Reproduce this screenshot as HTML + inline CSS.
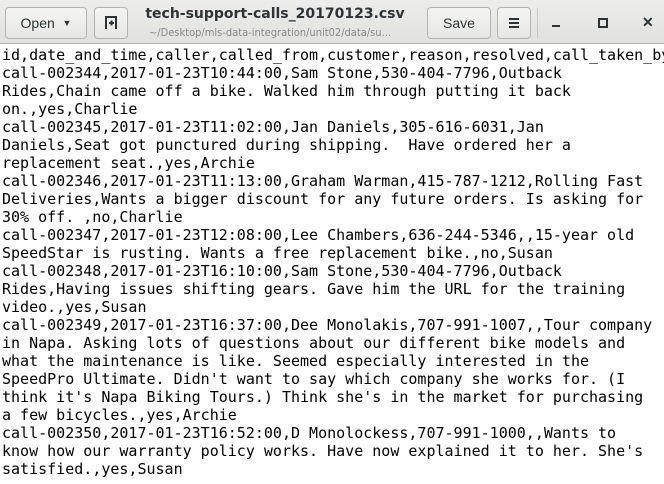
<!DOCTYPE html><html><head><style>
body{margin:0;width:664px;height:484px;overflow:hidden;background:#fff;font-family:"Liberation Sans",sans-serif}
.hb{position:absolute;left:0;top:0;width:664px;height:44px;background:linear-gradient(#ededec,#e1e1df);border-bottom:1px solid #b6b6b3;box-sizing:border-box}
.btn{position:absolute;top:7px;height:32px;box-sizing:border-box;border:1px solid #b3b3b0;border-radius:4px;background:linear-gradient(#f4f4f3,#e6e6e4);font-size:14px;color:#2e3436;display:flex;align-items:center;justify-content:center}
.t{position:absolute;left:130px;width:290px;text-align:center;top:6px;font-weight:bold;color:#2e3436;font-family:"DejaVu Sans",sans-serif;font-size:14px}
.s{position:absolute;left:110px;width:320px;text-align:center;top:26px;font-size:11px;color:#888a85;font-family:"DejaVu Sans Condensed","DejaVu Sans",sans-serif}
pre{position:absolute;left:2px;top:46px;margin:0;font-family:"DejaVu Sans Mono",monospace;font-size:15px;line-height:18px;color:#000;white-space:pre;width:662px;overflow:hidden}
.w{position:absolute;top:14px;font-size:14px;color:#2e3436;font-weight:bold}
</style></head><body>
<div class="hb">
<div class="btn" style="left:5px;width:82px">Open&nbsp;&nbsp;<span style="font-size:9px">▼</span></div>
<div class="btn" style="left:94px;width:34px"><svg width="14" height="14" viewBox="0 0 14 14"><path d="M2 13V1h10v12M5 7h5M7.5 4.5v5" stroke="#2e3436" stroke-width="2" fill="none"/></svg></div>
<div class="t">tech-support-calls_20170123.csv</div>
<div class="s">~/Desktop/mls-data-integration/unit02/data/su...</div>
<div class="btn" style="left:427px;width:64px">Save</div>
<div class="btn" style="left:497px;width:34px"><svg width="12" height="12"><path d="M1 2h10M1 6h10M1 10h10" stroke="#2e3436" stroke-width="2"/></svg></div>
<div style="position:absolute;left:537px;top:8px;width:1px;height:30px;background:#c8c8c5"></div>
<div style="position:absolute;left:552px;top:25px;width:8px;height:2px;background:#2e3436"></div>
<div style="position:absolute;left:598px;top:18px;width:6px;height:6px;border:2px solid #2e3436"></div>
<div class="w" style="left:642px">✕</div>
</div>
<pre>id,date_and_time,caller,called_from,customer,reason,resolved,call_taken_by
call-002344,2017-01-23T10:44:00,Sam Stone,530-404-7796,Outback
Rides,Chain came off a bike. Walked him through putting it back
on.,yes,Charlie
call-002345,2017-01-23T11:02:00,Jan Daniels,305-616-6031,Jan
Daniels,Seat got punctured during shipping.  Have ordered her a
replacement seat.,yes,Archie
call-002346,2017-01-23T11:13:00,Graham Warman,415-787-1212,Rolling Fast
Deliveries,Wants a bigger discount for any future orders. Is asking for
30% off. ,no,Charlie
call-002347,2017-01-23T12:08:00,Lee Chambers,636-244-5346,,15-year old
SpeedStar is rusting. Wants a free replacement bike.,no,Susan
call-002348,2017-01-23T16:10:00,Sam Stone,530-404-7796,Outback
Rides,Having issues shifting gears. Gave him the URL for the training
video.,yes,Susan
call-002349,2017-01-23T16:37:00,Dee Monolakis,707-991-1007,,Tour company
in Napa. Asking lots of questions about our different bike models and
what the maintenance is like. Seemed especially interested in the
SpeedPro Ultimate. Didn't want to say which company she works for. (I
think it's Napa Biking Tours.) Think she's in the market for purchasing
a few bicycles.,yes,Archie
call-002350,2017-01-23T16:52:00,D Monolockess,707-991-1000,,Wants to
know how our warranty policy works. Have now explained it to her. She's
satisfied.,yes,Susan</pre>
</body></html>
